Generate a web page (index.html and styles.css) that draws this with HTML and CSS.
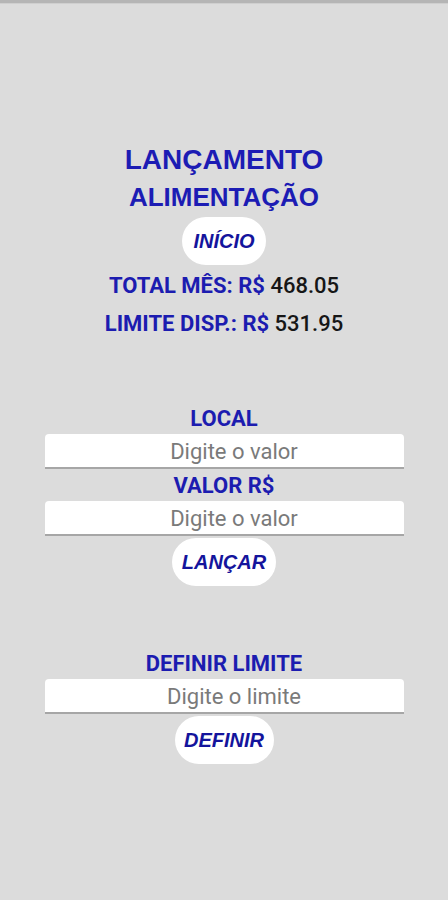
FILE: index.html
```html
<!DOCTYPE html>
<html lang="pt-BR">
<head>
<meta charset="utf-8">
<title>Lançamento Alimentação</title>
<link rel="stylesheet" href="styles.css">
</head>
<body>
<div class="topbar"></div>
<main class="screen">
  <h1 class="title">LANÇAMENTO</h1>
  <h2 class="subtitle">ALIMENTAÇÃO</h2>
  <button class="pill pill-inicio">INÍCIO</button>
  <p class="stat stat-total"><span class="lbl">TOTAL MÊS: R$</span> <span class="val">468.05</span></p>
  <p class="stat stat-limite"><span class="lbl">LIMITE DISP.: R$</span> <span class="val">531.95</span></p>

  <label class="field-label label-local">LOCAL</label>
  <div class="field"><input class="input" type="text" placeholder="Digite o valor"></div>
  <label class="field-label label-valor">VALOR R$</label>
  <div class="field"><input class="input" type="text" placeholder="Digite o valor"></div>
  <button class="pill pill-lancar">LANÇAR</button>

  <label class="field-label label-definir">DEFINIR LIMITE</label>
  <div class="field"><input class="input" type="text" placeholder="Digite o limite"></div>
  <button class="pill pill-definir">DEFINIR</button>
</main>
</body>
</html>
```
FILE: styles.css
```css
html, body {
  margin: 0;
  padding: 0;
  background: #dcdcdc;
  height: 100%;
}
body {
  font-family: "Liberation Sans", Arial, sans-serif;
}
.topbar {
  height: 3px;
  background: #b5b5b5;
  border-bottom: 1px solid #cfcfcf;
}
.screen {
  display: flex;
  flex-direction: column;
  align-items: center;
  padding-top: 139px;
}
.title, .subtitle {
  margin: 0;
  color: #1c1cb4;
  font-weight: 700;
  text-align: center;
}
.title {
  font-size: 28px;
  line-height: 34px;
}
.subtitle {
  font-size: 26px;
  line-height: 32px;
  margin-top: 4px;
}
.pill {
  border: none;
  background: #ffffff;
  border-radius: 24px;
  color: #14149c;
  font-family: "Liberation Sans", Arial, sans-serif;
  font-weight: 700;
  font-style: italic;
  font-size: 20px;
  padding: 0;
  height: 48px;
}
.pill-inicio {
  width: 84px;
  margin-top: 4px;
}
.pill-lancar {
  width: 104px;
  margin-top: 2px;
}
.pill-definir {
  width: 99px;
  margin-top: 2px;
}
.stat {
  margin: 0;
  font-family: Roboto, "Liberation Sans", sans-serif;
  font-size: 22px;
  line-height: 26px;
  text-align: center;
}
.stat-total { margin-top: 8px; }
.stat-limite { margin-top: 12px; }
.lbl {
  color: #1c1cb0;
  font-weight: 700;
}
.val {
  color: #161616;
  font-weight: 500;
}
.field-label {
  display: block;
  color: #1c1cb0;
  font-family: Roboto, "Liberation Sans", sans-serif;
  font-weight: 700;
  font-size: 22px;
  line-height: 26px;
  text-align: center;
}
.label-local { margin-top: 69px; }
.label-valor { margin-top: 4px; }
.label-definir { margin-top: 65px; }
.field {
  width: 359px;
  margin-top: 2px;
}
.input {
  display: block;
  box-sizing: border-box;
  width: 100%;
  height: 35px;
  border: none;
  border-bottom: 2px solid #a6a6a6;
  border-radius: 4px 4px 0 0;
  background: #ffffff;
  text-align: center;
  font-family: Roboto, "Liberation Sans", sans-serif;
  font-size: 22px;
  color: #222;
  padding: 2px 0 0 20px;
  outline: none;
}
.input::placeholder {
  color: #7a7a7a;
}
```
